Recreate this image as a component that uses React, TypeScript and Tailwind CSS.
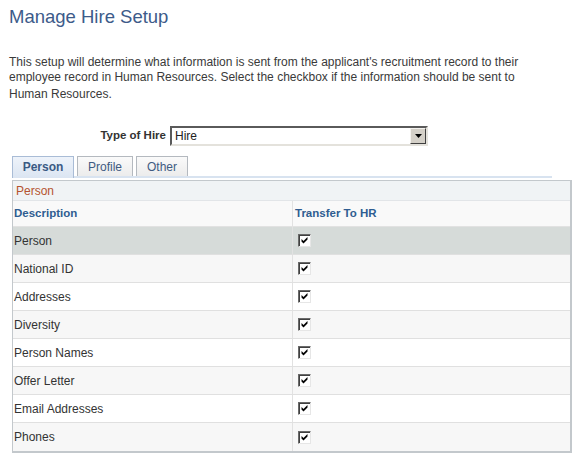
import React from "react";

const rows = [
  "Person",
  "National ID",
  "Addresses",
  "Diversity",
  "Person Names",
  "Offer Letter",
  "Email Addresses",
  "Phones",
];

const CheckBox = () => (
  <div className="w-[13px] h-[13px] bg-white border border-t-[#6a6a6a] border-l-[#6a6a6a] border-b-[#e6e6e6] border-r-[#e6e6e6] shadow-[inset_1px_1px_0_#404040]">
    <svg width="11" height="11" viewBox="0 0 11 11" className="block">
      <path d="M2.5 4 L4.5 6 L8.5 2 L8.5 4.5 L4.5 8.5 L2.5 6.5 Z" fill="#000" />
    </svg>
  </div>
);

const App = () => {
  return (
    <div
      className="w-[581px] h-[458px] bg-white overflow-hidden text-[#333]"
      style={{ fontFamily: '"Liberation Sans", Arial, sans-serif' }}
    >
      <h1 className="pl-[9px] pt-[6px] text-[18.5px] leading-[21px] text-[#3d5b8a] font-normal">
        Manage Hire Setup
      </h1>

      <div className="pl-[9px] mt-[28px] text-[12px] text-[#3a3a3a]">
        <div className="leading-[15px]">
          This setup will determine what information is sent from the applicant's recruitment record to their
        </div>
        <div className="leading-[15px]">
          employee record in Human Resources. Select the checkbox if the information should be sent to
        </div>
        <div className="leading-[15px] mt-[2px]">Human Resources.</div>
      </div>

      {/* Type of Hire */}
      <div className="flex items-center mt-[24px] h-[20px]">
        <div className="w-[166px] text-right text-[11.5px] font-bold text-[#333]">Type of Hire</div>
        <div className="ml-[4px] w-[258px] h-[20px] flex items-stretch bg-white border-2 border-t-[#5a5a5a] border-l-[#5a5a5a] border-b-[#e4e2dc] border-r-[#e4e2dc]">
          <div className="flex-1 pl-[3px] text-[12px] leading-[16px] text-[#222]">Hire</div>
          <div className="w-[16px] bg-[#d4d0c8] border border-t-[#f4f2ee] border-l-[#f4f2ee] border-b-[#404040] border-r-[#404040] flex items-center justify-center">
            <svg width="7" height="4" viewBox="0 0 7 4">
              <path d="M0 0 H7 L3.5 4 Z" fill="#000" />
            </svg>
          </div>
        </div>
      </div>

      {/* Tabs */}
      <div className="mt-[10px] ml-[12px] flex items-end h-[22px] w-[540px] border-b-2 border-[#d8e3f0]">
        <div className="w-[62px] h-[22px] -mb-[2px] bg-gradient-to-b from-[#eef3fa] to-[#dbe5f2] border border-b-0 border-[#a9bcd6] text-center text-[12px] font-bold text-[#3a5a84] leading-[20px]">
          Person
        </div>
        <div className="ml-[3px] w-[56px] h-[20px] bg-gradient-to-b from-[#fafafa] to-[#ececec] border border-b-0 border-[#b4b9bf] text-center text-[12px] text-[#3f5b82] leading-[21px]">
          Profile
        </div>
        <div className="ml-[3px] w-[52px] h-[20px] bg-gradient-to-b from-[#fafafa] to-[#ececec] border border-b-0 border-[#b4b9bf] text-center text-[12px] text-[#3f5b82] leading-[21px]">
          Other
        </div>
      </div>

      {/* Grid */}
      <div className="mt-[2px] ml-[12px] w-[560px] border border-[#c3c8cc] border-r-2 border-b-2">
        <div className="h-[20px] bg-[#f0f3f5] border-b border-[#e2e5e8] pl-[3px] pt-[1px] text-[12px] leading-[19px] text-[#b5532f]">
          Person
        </div>
        <div className="grid grid-cols-[280px_1fr] h-[26px] bg-[#f9f9f9] border-b border-[#e2e2e2]">
          <div className="border-r border-[#e2e2e2] pl-[1px] flex items-center text-[11.5px] font-bold text-[#2f5d91]">
            Description
          </div>
          <div className="pl-[2px] flex items-center text-[11.5px] font-bold text-[#2f5d91]">Transfer To HR</div>
        </div>
        {rows.map((name, idx) => (
          <div
            key={name}
            className={`grid grid-cols-[280px_1fr] h-[28px] ${
              idx === 0 ? "bg-[#d6dbd9]" : idx % 2 === 1 ? "bg-[#f7f7f7]" : "bg-white"
            } ${idx < rows.length - 1 ? "border-b border-[#e0e0e0]" : ""}`}
          >
            <div className="border-r border-[#e2e2e2] pl-[1px] flex items-center text-[12px] text-[#333]">
              {name}
            </div>
            <div className="pl-[5px] flex items-center">
              <CheckBox />
            </div>
          </div>
        ))}
      </div>
    </div>
  );
};

export default App;
